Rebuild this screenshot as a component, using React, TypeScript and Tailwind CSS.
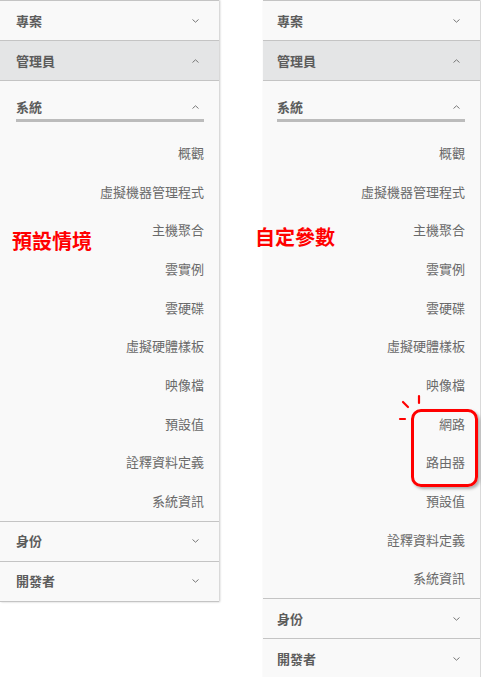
import React from 'react';

const font = { fontFamily: '"Noto Sans CJK TC", "Noto Sans", sans-serif' };

const Chevron = ({ up }: { up?: boolean }) => (
  <span className="flex w-[18px] justify-center">
    <svg width="7" height="4" viewBox="0 0 7 4" fill="none">
      {up ? (
        <path d="M0.5 3.5 L3.5 0.8 L6.5 3.5" stroke="#777" strokeWidth="1" />
      ) : (
        <path d="M0.5 0.5 L3.5 3.2 L6.5 0.5" stroke="#777" strokeWidth="1" />
      )}
    </svg>
  </span>
);

const Header = ({ label, up, active, pad }: { label: string; up?: boolean; active?: boolean; pad: string }) => (
  <div
    className={`flex h-[40px] items-center justify-between border-b border-[#c4c4c4] ${pad} ${
      active ? 'bg-[#e4e5e6]' : ''
    }`}
  >
    <span className="text-[13px] font-bold text-[#5c5c5c]">{label}</span>
    <Chevron up={up} />
  </div>
);

const Panel = ({ items, width, pad }: { items: string[]; width: string; pad: string }) => (
  <div className={`${width} shrink-0 border-t border-[#c4c4c4] bg-[#f9f9f9] shadow-[1px_0_2px_rgba(0,0,0,0.22)]`}>
    <Header label="專案" pad={pad} />
    <Header label="管理員" up active pad={pad} />
    <div className={`${pad} pt-[16px]`}>
      <div className="flex items-center justify-between pb-[3px]">
        <span className="text-[13px] font-bold leading-[19px] text-[#5c5c5c]">系統</span>
        <Chevron up />
      </div>
      <div className="h-[3px] bg-[#bcbcbc]" />
    </div>
    <div className="mt-[12px] border-b border-[#c4c4c4]">
      {items.map((item) => (
        <div key={item} className={`${pad} py-[10px] text-right text-[13px] leading-[18.67px] text-[#6a6a6a]`}>
          {item}
        </div>
      ))}
    </div>
    <Header label="身份" pad={pad} />
    <Header label="開發者" pad={pad} />
  </div>
);

const base = ['概觀', '虛擬機器管理程式', '主機聚合', '雲實例', '雲硬碟', '虛擬硬體樣板', '映像檔'];
const tail = ['預設值', '詮釋資料定義', '系統資訊'];

export default function App() {
  return (
    <div className="relative h-[677px] w-[481px] overflow-hidden bg-white" style={font}>
      <div className="flex items-start">
        <Panel items={[...base, ...tail]} width="w-[219px]" pad="pl-4 pr-[15px]" />
        <div className="ml-[44px]">
          <Panel items={[...base, '網路', '路由器', ...tail]} width="w-[217px]" pad="pl-[14px] pr-[15px]" />
        </div>
      </div>

      {/* annotations */}
      <div className="absolute left-[12px] top-[228px] text-[20px] font-bold leading-[26px] text-[#ff0000]">預設情境</div>
      <div className="absolute left-[255px] top-[224px] text-[20px] font-bold leading-[26px] text-[#ff0000]">自定參數</div>
      <div className="absolute left-[411px] top-[409px] h-[78px] w-[67px] rounded-[10px] border-[3px] border-[#ff0000] shadow-[2px_2px_3px_rgba(0,0,0,0.3)]" />
      <svg className="absolute left-[395px] top-[392px]" width="30" height="32" viewBox="0 0 30 32">
        <path d="M24 4 L24 11" stroke="#ff0000" strokeWidth="2.2" strokeLinecap="round" />
        <path d="M8 10 L13 15" stroke="#ff0000" strokeWidth="2.2" strokeLinecap="round" />
        <path d="M5 27 L10 27" stroke="#ff0000" strokeWidth="2.2" strokeLinecap="round" />
      </svg>
    </div>
  );
}
